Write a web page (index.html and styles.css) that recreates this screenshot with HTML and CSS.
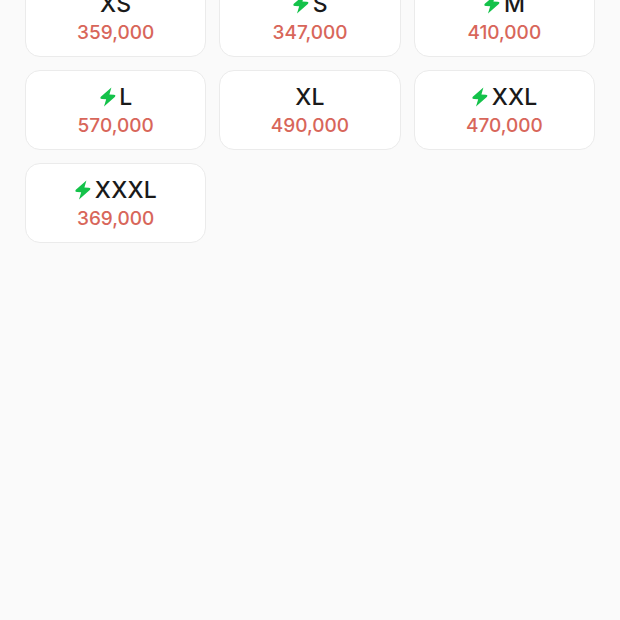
FILE: index.html
```html
<!DOCTYPE html>
<html lang="en">
<head>
<meta charset="utf-8">
<title>Sizes</title>
<link rel="stylesheet" href="styles.css">
</head>
<body>
<svg class="defs" width="0" height="0" aria-hidden="true"><symbol id="bolt" viewBox="0 0 18 20"><path d="M12.4 .6 L1.8 9.8 Q.4 11.8 3 12 L7.2 12.2 L5 19.4 L15.8 10 Q17.4 8 14.8 7.8 L10.4 7.6 Z"/></symbol></svg>
<main class="grid">
  <div class="card"><div class="name">XS</div><div class="price">359,000</div></div>
  <div class="card"><div class="name"><svg class="bolt"><use href="#bolt"/></svg>S</div><div class="price">347,000</div></div>
  <div class="card"><div class="name"><svg class="bolt"><use href="#bolt"/></svg>M</div><div class="price">410,000</div></div>
  <div class="card"><div class="name"><svg class="bolt"><use href="#bolt"/></svg>L</div><div class="price">570,000</div></div>
  <div class="card"><div class="name">XL</div><div class="price">490,000</div></div>
  <div class="card"><div class="name"><svg class="bolt"><use href="#bolt"/></svg>XXL</div><div class="price">470,000</div></div>
  <div class="card"><div class="name"><svg class="bolt"><use href="#bolt"/></svg>XXXL</div><div class="price">369,000</div></div>
</main>
</body>
</html>
```
FILE: styles.css
```css
html, body {
  margin: 0;
  height: 620px;
  overflow: hidden;
  background: #fafafa;
}
.defs {
  display: block;
  height: 0;
}
.grid {
  display: grid;
  grid-template-columns: repeat(3, 1fr);
  grid-auto-rows: 80px;
  gap: 13px;
  margin-top: -23.5px;
  padding: 0 25px;
  font-family: Inter, "Liberation Sans", sans-serif;
}
.card {
  display: flex;
  flex-direction: column;
  align-items: center;
  justify-content: center;
  box-sizing: border-box;
  padding-top: 4px;
  background: #fff;
  border: 1px solid #ebebeb;
  border-radius: 15px;
}
.name {
  display: flex;
  align-items: center;
  height: 28px;
  font-size: 23px;
  font-weight: 450;
  line-height: 28px;
  letter-spacing: .2px;
  color: #1a1a1a;
}
.bolt {
  width: 18px;
  height: 20px;
  margin-right: 2.5px;
  fill: #14c24a;
}
.price {
  height: 28px;
  margin-top: 1px;
  font-size: 19px;
  font-weight: 500;
  line-height: 28px;
  color: #d8665a;
}
```
